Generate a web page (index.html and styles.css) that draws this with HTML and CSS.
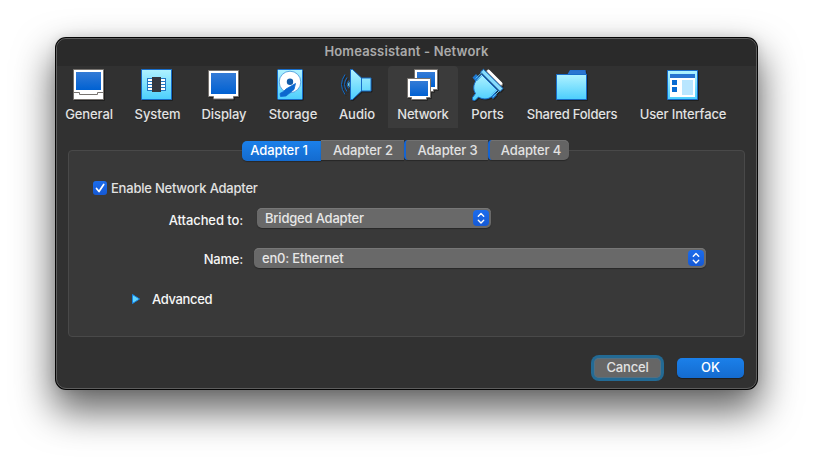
FILE: index.html
```html
<!DOCTYPE html>
<html lang="en">
<head>
<meta charset="utf-8">
<title>Homeassistant - Network</title>
<link rel="stylesheet" href="styles.css">
</head>
<body>
<svg class="defs" width="0" height="0">
  <defs>
    <linearGradient id="blue" x1="0" y1="0" x2="0" y2="1"><stop offset="0" stop-color="#347bd6"/><stop offset="1" stop-color="#0061d2"/></linearGradient>
    <linearGradient id="cyan" x1="0" y1="0" x2="0" y2="1"><stop offset="0" stop-color="#b0f2ff"/><stop offset="1" stop-color="#4bcefd"/></linearGradient>
  </defs>
</svg>
<main class="window">
  <header class="titlebar">Homeassistant - Network</header>
  <nav class="toolbar">
    <button class="tool">
      <svg class="icon" viewBox="0 0 32 32"><path d="M.5 .5h30v30H.5z" fill="#fff" stroke="#77736f"/><path d="M3 3h25v18H3z" fill="url(#blue)"/><path d="M.5 23.500H6.500v2h18v-2h6" fill="none" stroke="#77736f"/></svg>
      <span class="t-general">General</span>
    </button>
    <button class="tool">
      <svg class="icon" viewBox="0 0 32 32"><path d="M.5 .5h30v30H.5z" fill="url(#cyan)" stroke="#176cc9"/><path d="M6 9h5v13H6zM20 9h5v13h-5z" fill="#2379c6"/><path d="M7 10h4v2H7zm0 3h4v2H7zm0 3h4v2H7zm0 3h4v2H7zM20 10h4v2h-4zm0 3h4v2h-4zm0 3h4v2h-4zm0 3h4v2h-4z" fill="#fff"/><path d="M11 8h9v15h-9z" fill="#35383f"/></svg>
      <span class="t-system">System</span>
    </button>
    <button class="tool">
      <svg class="icon" viewBox="0 0 32 32"><path d="M.5 1.500h30v26h-5v2.500H5.500v-2.500h-5z" fill="#fff" stroke="#77736f"/><path d="M3 4h25v21H3z" fill="url(#blue)"/></svg>
      <span class="t-display">Display</span>
    </button>
    <button class="tool">
      <svg class="icon" viewBox="0 0 32 32"><rect x=".5" y=".5" width="25" height="30" rx="1" fill="url(#cyan)" stroke="#176cc9"/><circle cx="13" cy="13" r="10.800" fill="#fff" stroke="#3b91d8" stroke-width=".8"/><path d="M18.500 14.500L17 20.500 12 24.500l-3 2.500-5.500 .5L3 24.500l3.500-2 2.500-2.500z" fill="#0c68cf" stroke="#0c68cf" stroke-width=".8" stroke-linejoin="round"/><circle cx="13" cy="12.800" r="3.200" fill="#135ba8"/></svg>
      <span class="t-storage">Storage</span>
    </button>
    <button class="tool">
      <svg class="icon" viewBox="0 0 32 32"><path d="M9.500 .5h2L20.500 9h9.500v13h-9.500l-9 8.500h-2z" fill="url(#cyan)" stroke="#176cc9"/><path d="M20.500 9v13" stroke="#176cc9"/><path d="M8.500 12.500q-3 3 0 6z" fill="#79dcfa"/><path d="M8 11.500q-3.500 4 0 8M6 8.500q-5 7 0 14M4 5.500q-7 10 0 20" fill="none" stroke="#126bc8"/></svg>
      <span class="t-audio">Audio</span>
    </button>
    <button class="tool tool-selected">
      <svg class="icon" viewBox="0 0 32 32"><path d="M7.500 .5h23v20h-4v2h-19z" fill="#fff" stroke="#77736f"/><path d="M10 3h18v15H10z" fill="url(#blue)"/><path d="M.5 9.500h23v19h-4v2h-15v-2h-4z" fill="#fff" stroke="#77736f"/><path d="M3 12h18v15H3z" fill="url(#blue)"/></svg>
      <span class="t-network">Network</span>
    </button>
    <button class="tool">
      <svg class="icon" viewBox="0 0 32 32"><path d="M16 2.500L29 15.500" stroke="#77736f" stroke-width="4" stroke-linecap="round"/><path d="M.5 9.500L4 6l4 4-4 4zM17 27l4-4 4 4-4 4z" transform="translate(0 -1)" fill="#1e78d0"/><path d="M9.500 5.500l16 16-5 5c-3 4-9.500 4.500-14 1.500L3 31.500.5 31v-2.500l3-4C1 20.500 1 16 4.500 11z" fill="url(#cyan)" stroke="#166cc9"/><path d="M8.500 3L11.500 .3 31 19.500l-3 3z" fill="#87dcfa" stroke="#166cc9"/><path d="M3.500 9.500L10.500 3M21 28l6-6M5 12l5-5M19 26l5-5" stroke="#5bbff1" fill="none"/><path d="M16.500 2L29 14.500" stroke="#fff" stroke-width="2.800" stroke-linecap="round"/></svg>
      <span class="t-ports">Ports</span>
    </button>
    <button class="tool">
      <svg class="icon" viewBox="0 0 32 32"><path d="M11 6l3-5h15.500l1 5z" fill="#2471cf"/><path d="M.5 5.500h30v25H.5z" fill="url(#cyan)" stroke="#176cc9"/><path d="M14 2h15v3H12z" fill="#2b75d0"/></svg>
      <span class="t-folders">Shared Folders</span>
    </button>
    <button class="tool">
      <svg class="icon" viewBox="0 0 32 32"><path d="M.5 1.500h30v29H.5z" fill="url(#cyan)" stroke="#176cc9"/><path d="M3 9h25v19H3z" fill="#fff"/><path d="M3 5h25v4H3z" fill="#2673d1"/><path d="M5 11h5v5H5zm0 7h5v5H5z" fill="#096bd2"/><path d="M15 11h11v15H15z" fill="#b9e6ff"/></svg>
      <span class="t-interface">User Interface</span>
    </button>
  </nav>
  <section class="content">
    <div class="tabs">
      <button class="tab tab-active">Adapter 1</button>
      <button class="tab">Adapter 2</button>
      <button class="tab tab-split">Adapter 3</button>
      <button class="tab tab-split">Adapter 4</button>
    </div>
    <div class="panel">
      <label class="enable"><span class="check"><svg viewBox="0 0 14 14"><path d="M3.500 7.500l2.500 3 4.700-7" fill="none" stroke="#fff" stroke-width="1.700" stroke-linecap="round" stroke-linejoin="round"/></svg></span><span class="t-enable">Enable Network Adapter</span></label>
      <div class="row row-attached">
        <span class="label t-attached">Attached to:</span>
        <div class="select"><span class="t-bridged">Bridged Adapter</span><span class="stepper"><svg viewBox="0 0 16 16"><path d="M5.300 6.200L8 3.500l2.700 2.700M5.300 10.300L8 13l2.700-2.700" fill="none" stroke="#fff" stroke-width="1.400" stroke-linecap="round" stroke-linejoin="round"/></svg></span></div>
      </div>
      <div class="row row-name">
        <span class="label t-name">Name:</span>
        <div class="select"><span class="t-ethernet">en0: Ethernet</span><span class="stepper"><svg viewBox="0 0 16 16"><path d="M5.300 6.200L8 3.500l2.700 2.700M5.300 10.300L8 13l2.700-2.700" fill="none" stroke="#fff" stroke-width="1.400" stroke-linecap="round" stroke-linejoin="round"/></svg></span></div>
      </div>
      <div class="advanced"><svg class="arrow" viewBox="0 0 8 10"><path d="M.5 .5L7.500 5 .5 9.500z" fill="#62d5ff" stroke="#1684e5"/></svg><span class="t-advanced">Advanced</span></div>
    </div>
  </section>
  <footer class="actions">
    <button class="btn btn-cancel">Cancel</button>
    <button class="btn btn-ok">OK</button>
  </footer>
</main>
</body>
</html>
```
FILE: styles.css
```css
* { box-sizing: border-box; }
body {
  margin: 0;
  height: 463px;
  padding: 38px 0 0 56px;
  overflow: hidden;
  background: #fff;
  font: 500 13px/16px Inter, "Liberation Sans", sans-serif;
  color: #e2e2e2;
}
button {
  margin: 0;
  padding: 0;
  border: 0;
  background: none;
  color: inherit;
  font: inherit;
  letter-spacing: inherit;
}
svg { display: block; }
.defs { position: absolute; }
.window {
  width: 701px;
  height: 351px;
  border: 1px solid #5e5e5e;
  border-radius: 10px;
  background: #313131;
  box-shadow: 0 0 0 1px #060606, 0 19px 38px 3px rgba(0, 0, 0, .61), 0 0 12px rgba(0, 0, 0, .12);
  white-space: nowrap;
}
.titlebar {
  height: 27px;
  padding-top: 4px;
  border-radius: 9px 9px 0 0;
  background: #2a2a2a;
  color: #aaa;
  text-align: center;
  font-weight: 600;
  letter-spacing: .16px;
}
.toolbar {
  display: grid;
  grid-template-columns: 64px 72px 62px 76px 57px 70px 59px 110px 112px;
  height: 62px;
}
.tool {
  display: flex;
  flex-direction: column;
  align-items: center;
  padding-top: 3px;
}
.tool:nth-child(5) { padding-right: 5px; }
.tool-selected { border-radius: 4px 4px 0 0; background: #3b3b3b; }
.icon {
  width: 32px;
  height: 32px;
  overflow: visible;
  filter: drop-shadow(1px 1px 0 rgba(0, 0, 0, .35));
}
.tool span { margin-top: 5px; text-shadow: 0 1px 0 rgba(0, 0, 0, .3); }
.tool .t-general { letter-spacing: -.1px; }
.tool .t-system { letter-spacing: -.1px; padding-left: 1px; }
.tool .t-display { letter-spacing: -.1px; }
.tool .t-network { letter-spacing: -.25px; }
.tool .t-folders { letter-spacing: -.21px; }
.tool .t-interface { letter-spacing: -.14px; }
.content { display: grid; padding: 12px 11px 0; }
.tabs {
  grid-area: 1 / 1;
  z-index: 1;
  display: flex;
  align-items: flex-start;
  justify-self: center;
  width: 327px;
  height: 21px;
  margin-right: 3px;
}
.tab {
  width: 83px;
  height: 20px;
  padding-left: 2px;
  background: #646464;
  box-shadow: 0 1px 1px rgba(0, 0, 0, .3), inset 0 1px 0 #727272;
  letter-spacing: -.12px;
}
.tab-active {
  width: 79px;
  height: 20px;
  margin-top: 1px;
  padding: 0 4px 2px 0;
  border-radius: 5px 0 0 5px;
  background: linear-gradient(#1b80ea, #146bcf);
  box-shadow: 0 1px 1px rgba(0, 0, 0, .3);
  color: #fff;
}
.tab-split { border-left: 2px solid #1564d2; width: 84px; border-radius: 4px 0 0 4px; }
.tab:last-child { width: 81px; padding-left: 4px; border-radius: 4px 5px 5px 4px; }
.panel {
  grid-area: 1 / 1;
  height: 187px;
  margin-top: 10px;
  border: 1px solid #494949;
  border-radius: 4px;
  background: #393939;
  color: #f6f6f6;
}
.enable {
  display: flex;
  gap: 4px;
  padding: 29px 0 0 24px;
  color: #e2e2e2;
  letter-spacing: -.22px;
}
.check {
  width: 14px;
  height: 14px;
  margin-top: 1px;
  border-radius: 3px;
  background: linear-gradient(#1b6cec, #1559d5);
}
.row { display: flex; }
.row-attached { margin-top: 12px; gap: 14px; }
.row-name { margin-top: 20px; gap: 11px; }
.label { width: 174px; padding-top: 4px; text-align: right; letter-spacing: -.1px; }
.row-name .label { letter-spacing: -.2px; }
.select {
  display: flex;
  justify-content: space-between;
  width: 234px;
  height: 20px;
  padding: 2px 2px 2px 8px;
  border-radius: 5px;
  background: #696969;
  box-shadow: 0 1px 1px rgba(0, 0, 0, .3), inset 0 1px 0 #777;
  color: #e7e7e7;
  letter-spacing: -.2px;
}
.row-name .select { width: 452px; }
.stepper {
  width: 16px;
  height: 16px;
  border-radius: 4px;
  background: linear-gradient(#1b6cec, #1559d5);
}
.advanced {
  display: flex;
  align-items: center;
  gap: 12px;
  padding: 23px 0 0 63px;
  letter-spacing: -.35px;
}
.row-name .label { padding-top: 3px; }
.arrow { width: 8px; height: 10px; }
.actions {
  display: flex;
  justify-content: flex-end;
  gap: 16px;
  padding: 21px 12px 0 0;
}
.btn { width: 67px; height: 20px; padding-bottom: 2px; border-radius: 5px; }
.btn-cancel {
  background: #666;
  box-shadow: inset 0 0 0 1px #527083, 0 0 0 3px #236a94;
  letter-spacing: -.2px;
}
.btn-ok {
  background: linear-gradient(#1b80ea, #146bcf);
  box-shadow: 0 1px 1px rgba(0, 0, 0, .4);
  color: #fff;
}
```
